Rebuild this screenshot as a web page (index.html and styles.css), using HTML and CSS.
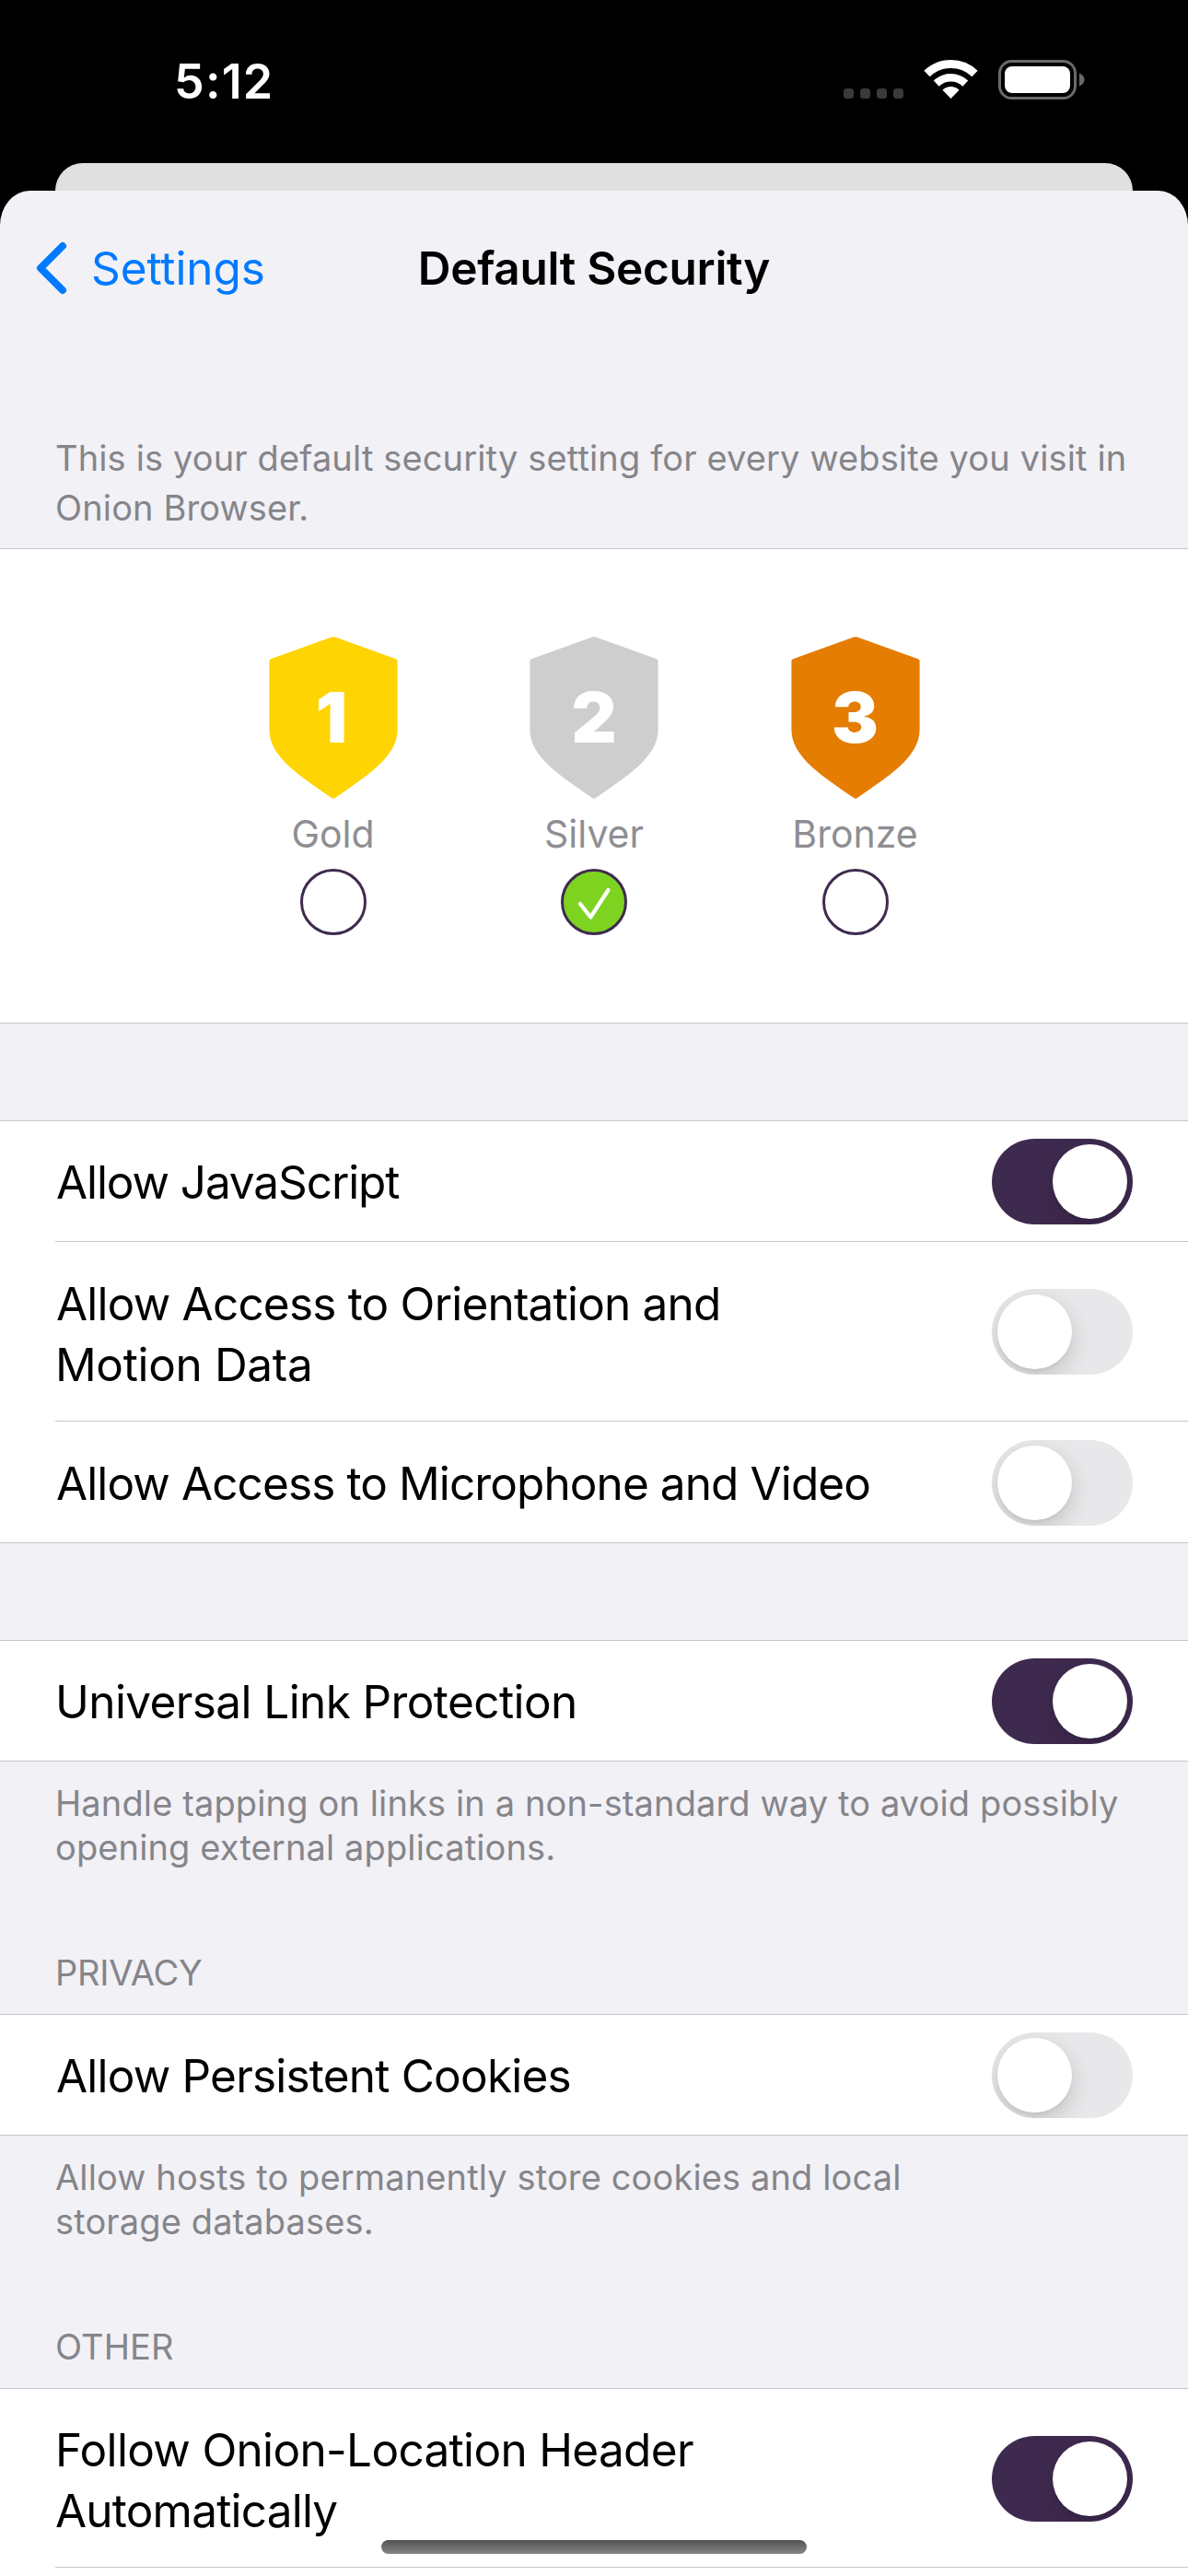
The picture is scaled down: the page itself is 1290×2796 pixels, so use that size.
FILE: index.html
```
<!DOCTYPE html>
<html lang="en">
<head>
<meta charset="utf-8">
<title>Default Security</title>
<link rel="stylesheet" href="styles.css">
</head>
<body>
<div class="screen">
  <header class="status">
    <span class="time">5:12</span>
    <svg class="status-icons" width="262" height="43" viewBox="0 0 262 43">
      <g fill="#3a3a3a">
        <rect x="0" y="31" width="11" height="11" rx="3.5"/>
        <rect x="18" y="31" width="11" height="11" rx="3.5"/>
        <rect x="36" y="31" width="11" height="11" rx="3.5"/>
        <rect x="54" y="31" width="11" height="11" rx="3.5"/>
      </g>
      <g fill="none" stroke="#fff">
        <path stroke-width="9" d="M90.5 15A37.5 37.5 0 0 1 142.5 15"/>
        <path stroke-width="8.4" d="M100.7 25.6A22.8 22.8 0 0 1 132.3 25.6"/>
      </g>
      <path fill="#fff" d="M116.5 42L107.5 32.7A13 13 0 0 1 125.5 32.7Z"/>
      <rect x="169.5" y="1.5" width="82" height="40" rx="13" fill="none" stroke="#6a6a6a" stroke-width="3"/>
      <rect x="175" y="7" width="71" height="29" rx="8" fill="#fff"/>
      <path fill="#6a6a6a" d="M256 14.5C259.500 16 261.500 18.500 261.500 21.500S259.500 27 256 28.500Z"/>
    </svg>
  </header>
  <div class="sheet-behind"></div>
  <main class="sheet">
    <nav class="nav">
      <a class="back">
        <svg width="34" height="58" viewBox="0 0 34 58"><path d="M29 5L5 29L29 53" fill="none" stroke="#007aff" stroke-width="8" stroke-linecap="round" stroke-linejoin="round"/></svg>
        <span>Settings</span>
      </a>
      <h1 class="title">Default Security</h1>
      <span></span>
    </nav>
    <p class="intro">This is your default security setting for every website you visit in<br>Onion Browser.</p>

    <section class="group tiers">
      <div class="tier gold">
        <div class="shield">
          <svg width="140" height="176" viewBox="0 0 140 176"><path fill="currentColor" d="M68 .6Q70 -.2 72 .6L138 24.200Q139.600 25 139.600 27V101C139.600 131 105 152 71.500 175.300Q70 176.400 68.500 175.300C35 152 .4 131 .4 101V27Q.4 25 2 24.200Z"/></svg>
          <b class="rank first">1</b>
        </div>
        <span class="tier-name">Gold</span>
        <span class="radio"></span>
      </div>
      <div class="tier silver">
        <div class="shield">
          <svg width="140" height="176" viewBox="0 0 140 176"><path fill="currentColor" d="M68 .6Q70 -.2 72 .6L138 24.200Q139.600 25 139.600 27V101C139.600 131 105 152 71.500 175.300Q70 176.400 68.500 175.300C35 152 .4 131 .4 101V27Q.4 25 2 24.200Z"/></svg>
          <b class="rank">2</b>
        </div>
        <span class="tier-name">Silver</span>
        <span class="radio checked">
          <svg width="66" height="66" viewBox="3 3 66 66"><path d="M21 38L32.300 52.500L51.500 23" fill="none" stroke="#fff" stroke-width="4.200" stroke-linecap="round" stroke-linejoin="round"/></svg>
        </span>
      </div>
      <div class="tier bronze">
        <div class="shield">
          <svg width="140" height="176" viewBox="0 0 140 176"><path fill="currentColor" d="M68 .6Q70 -.2 72 .6L138 24.200Q139.600 25 139.600 27V101C139.600 131 105 152 71.500 175.300Q70 176.400 68.500 175.300C35 152 .4 131 .4 101V27Q.4 25 2 24.200Z"/></svg>
          <b class="rank">3</b>
        </div>
        <span class="tier-name">Bronze</span>
        <span class="radio"></span>
      </div>
    </section>

    <section class="group spaced">
      <div class="row">
        <span class="label tight">Allow JavaScript</span>
        <span class="toggle on"></span>
      </div>
      <div class="row tall">
        <span class="label">Allow Access to Orientation and<br><span class="loose">Motion Data</span></span>
        <span class="toggle"></span>
      </div>
      <div class="row last">
        <span class="label snug">Allow Access to Microphone and Video</span>
        <span class="toggle"></span>
      </div>
    </section>

    <section class="group spaced">
      <div class="row">
        <span class="label open">Universal Link Protection</span>
        <span class="toggle on"></span>
      </div>
    </section>
    <div class="between">
      <p class="note">Handle tapping on links in a non-standard way to avoid possibly<br>opening external applications.</p>
      <h2 class="heading">PRIVACY</h2>
    </div>

    <section class="group">
      <div class="row">
        <span class="label">Allow Persistent Cookies</span>
        <span class="toggle"></span>
      </div>
    </section>
    <div class="between">
      <p class="note">Allow hosts to permanently store cookies and local<br>storage databases.</p>
      <h2 class="heading wide">OTHER</h2>
    </div>

    <section class="group fill">
      <div class="row tall">
        <span class="label"><span class="header-line">Follow Onion-Location Header</span><br>Automatically</span>
        <span class="toggle on"></span>
      </div>
      <div class="row"></div>
    </section>
  </main>
  <div class="home-indicator"></div>
</div>
</body>
</html>
```
FILE: styles.css
```
* { box-sizing: border-box; }

body {
  margin: 0;
  background: #000;
  font-family: Inter, "Liberation Sans", sans-serif;
  color: #000;
}

h1, h2, p { margin: 0; font-weight: 400; }

.screen {
  position: relative;
  display: flex;
  flex-direction: column;
  width: 1290px;
  height: 2796px;
  overflow: hidden;
}

/* Status bar */
.status {
  flex: none;
  display: flex;
  align-items: center;
  justify-content: space-between;
  height: 177px;
  padding: 0 112px 0 189px;
  color: #fff;
}
.time { font-size: 52px; font-weight: 600; letter-spacing: 1.2px; }
.status-icons { margin-bottom: 4px; }

/* Sheets */
.sheet-behind {
  flex: none;
  height: 30px;
  margin: 0 60px;
  background: #e0e0e0;
  border-radius: 30px 30px 0 0;
}
.sheet {
  flex: 1;
  min-height: 0;
  overflow: hidden;
  background: #f2f1f6;
  border-radius: 32px 32px 0 0 / 38px 38px 0 0;
}

.nav {
  display: grid;
  grid-template-columns: 1fr auto 1fr;
  align-items: center;
  height: 168px;
  padding: 0 39px;
  font-size: 49.5px;
}
.back { display: flex; align-items: center; gap: 26px; color: #007aff; }
.back span { letter-spacing: -0.1px; }
.title { font-size: 49.5px; font-weight: 600; letter-spacing: -0.3px; }

.intro {
  padding: 95px 60px 17px;
  font-size: 38px;
  line-height: 54px;
  letter-spacing: 0.14px;
  color: #85858a;
}

/* Groups */
.group {
  background: #fff;
  border-top: 1px solid #c6c6c8;
  border-bottom: 1px solid #c6c6c8;
}
.spaced { margin-top: 105px; }
.fill { height: 300px; }

/* Security tiers */
.tiers {
  display: flex;
  justify-content: center;
  gap: 143.500px;
  height: 516px;
  padding-top: 95px;
}
.tier { display: flex; flex-direction: column; align-items: center; width: 140px; }
.gold { color: #ffd403; }
.silver { color: #cecece; }
.bronze { color: #e47d02; }
.shield { display: grid; place-items: center; height: 176px; }
.shield > * { grid-area: 1 / 1; }
.shield svg { display: block; }
.rank {
  padding-bottom: 2px;
  font-size: 76px;
  font-weight: 900;
  line-height: 92px;
  color: #fff;
}
.rank.first { padding-right: 3px; }
.tier-name { margin: 13px 0; font-size: 41px; line-height: 50px; color: #8e8e93; }
.radio {
  width: 72px;
  height: 72px;
  border: 3px solid #3f2a4f;
  border-radius: 50%;
}
.radio svg { display: block; }
.checked { background: #7ed321; }

/* Setting rows */
.row {
  display: flex;
  align-items: center;
  justify-content: space-between;
  height: 131px;
  margin-left: 60px;
  padding-right: 60px;
  border-bottom: 1px solid #c6c6c8;
}
.row:last-child { height: 130px; border-bottom: 0; }
.row.last { height: 131px; padding-top: 1px; }
.row.tall { height: 195px; }
.fill .row.tall { height: 194px; }
.label {
  padding-top: 1px;
  padding-left: 1px;
  font-size: 49.5px;
  line-height: 66px;
  letter-spacing: -0.8px;
}
.tall .label { padding-top: 5px; }
.fill .label { padding-top: 4px; padding-left: 0; }
.tight { letter-spacing: -1.1px; }
.snug { letter-spacing: -0.9px; }
.open { padding-left: 0; letter-spacing: -0.6px; }
.loose { margin-left: -1px; letter-spacing: -0.35px; }
.header-line { letter-spacing: -0.68px; }

.toggle {
  flex: none;
  display: flex;
  width: 153px;
  height: 93px;
  margin-top: 1px;
  padding: 6px;
  overflow: hidden;
  background: #e8e8ea;
  border-radius: 47px;
}
.toggle::before {
  content: "";
  width: 81px;
  height: 81px;
  background: #fff;
  border-radius: 50%;
  box-shadow: 0 9px 24px rgba(0, 0, 0, 0.16), 0 3px 3px rgba(0, 0, 0, 0.04);
}
.toggle.on { justify-content: flex-end; background: #3f2a4f; }

/* Text between groups */
.between { padding: 21px 60px; color: #85858a; }
.note { font-size: 38px; line-height: 48px; letter-spacing: 0.13px; }
.heading { margin-top: 88px; font-size: 38px; line-height: 48px; letter-spacing: -0.2px; }
.heading.wide { letter-spacing: 0.09px; }

.home-indicator {
  position: absolute;
  left: 414px;
  top: 2757px;
  width: 462px;
  height: 15px;
  border-radius: 8px;
  background: linear-gradient(#535353, #858585);
}
```
